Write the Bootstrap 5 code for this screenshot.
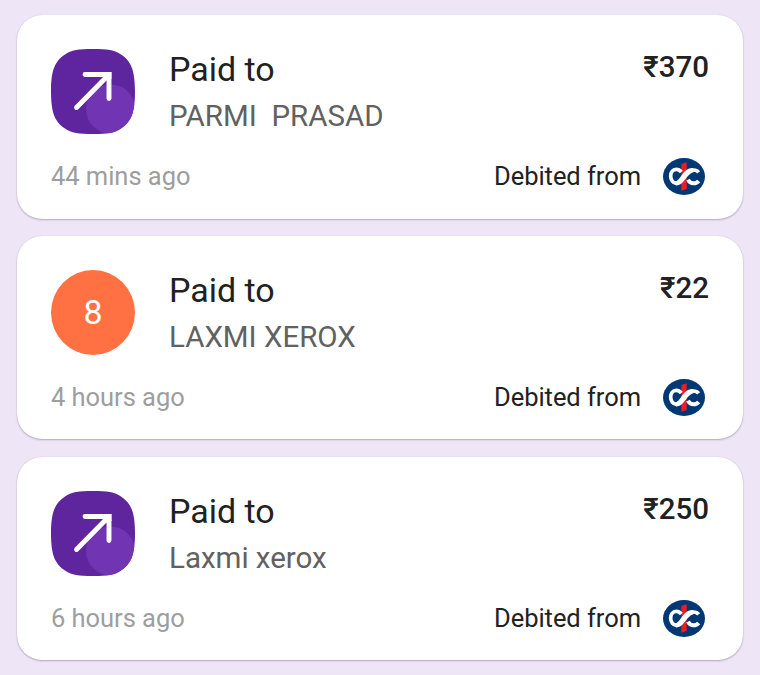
<!DOCTYPE html>
<html lang="en">
<head>
<meta charset="utf-8">
<meta name="viewport" content="width=device-width, initial-scale=1">
<title>Payment history</title>
<link href="https://cdn.jsdelivr.net/npm/bootstrap@5.3.0/dist/css/bootstrap.min.css" rel="stylesheet">
<style>
body { background: #eee6f6; font-family: Roboto, "Noto Sans", sans-serif; color: #212121; }
.history { padding: 15px 17px 14px; gap: 17.2px; }
.payment { height: 203.6px; border-radius: 25px; padding: 34px 34px 0; box-shadow: 0 1px 2px rgba(60,40,80,.32), 0 0 1px rgba(60,40,80,.15); }
.payment-main { height: 85px; gap: 34px; }
.avatar { width: 84px; height: 85px; flex: none; }
.avatar-initial { background: #ff7043; font-size: 34px; line-height: 1; }
.details { margin-top: -3px; }
.kind { font-size: 34px; line-height: 47px; letter-spacing: -.05px; }
.payee { font-size: 29.5px; line-height: 46px; letter-spacing: -.01px; color: #616161; white-space: pre; }
.amount { font-size: 29.5px; line-height: 36px; font-weight: 500; }
.payment-foot { height: 37px; margin-top: 24px; font-size: 25.5px; line-height: 37px; letter-spacing: -.04px; }
.when { color: #9e9e9e; }
.source { gap: 22px; margin-right: 4px; }
.bank { width: 42px; height: 37px; }
</style>
<script src="https://cdn.jsdelivr.net/npm/bootstrap@5.3.0/dist/js/bootstrap.bundle.min.js"></script>
</head>
<body>
<svg width="0" height="0" class="position-absolute" aria-hidden="true">
  <defs>
    <clipPath id="tile"><path d="M42 0C56 0 64 1 70 5.500C80 12 84 21 84 42.500C84 64 80 73 70 79.500C64 84 56 85 42 85C28 85 20 84 14 79.500C4 73 0 64 0 42.500C0 21 4 12 14 5.500C20 1 28 0 42 0Z"/></clipPath>
    <symbol id="sent" viewBox="0 0 84 85">
      <g clip-path="url(#tile)">
        <rect width="84" height="85" fill="#5f259f"/>
        <circle cx="59.500" cy="60" r="24.500" fill="#7134b3"/>
      </g>
      <path d="M34 25.500H58V49.500M57 26.500L25.500 58.500" fill="none" stroke="#fff" stroke-width="4.900" stroke-linecap="round"/>
      <path d="M54 23.050H60.450V30H54Z" fill="#fff"/>
    </symbol>
    <symbol id="bank" viewBox="0 0 126 111">
      <ellipse cx="63" cy="55.500" rx="63" ry="55.500" fill="#003874"/>
      <path d="M55 18L71 13V93L55 98Z" fill="#ed1c24"/>
      <path d="M55 42C50 36 46 34 40 34C29 34 23 43 23 54C23 66 30 76 40 76C59 76 68 36 91 36C99 36 104 39 107 43" fill="none" stroke="#fff" stroke-width="11"/>
      <path d="M75 65C79 73 84 76 91 76C99 76 104 73 107 69" fill="none" stroke="#fff" stroke-width="12"/>
      <path d="M38 82C48 83 55 78 62 70C72 58 78 47 92 42L90 30C72 29 64 42 56 52C50 60 45 69 35 71Z" fill="#fff"/>
    </symbol>
  </defs>
</svg>
<main class="history d-flex flex-column">
  <article class="payment bg-white">
    <div class="payment-main d-flex">
      <svg class="avatar"><use href="#sent"/></svg>
      <div class="details flex-grow-1"><div class="kind">Paid to</div><div class="payee">PARMI  PRASAD</div></div>
      <div class="amount">₹370</div>
    </div>
    <div class="payment-foot d-flex justify-content-between">
      <span class="when">44 mins ago</span>
      <span class="source d-flex align-items-center">Debited from <svg class="bank"><use href="#bank"/></svg></span>
    </div>
  </article>
  <article class="payment bg-white">
    <div class="payment-main d-flex">
      <div class="avatar avatar-initial rounded-circle text-white d-flex align-items-center justify-content-center">8</div>
      <div class="details flex-grow-1"><div class="kind">Paid to</div><div class="payee">LAXMI XEROX</div></div>
      <div class="amount">₹22</div>
    </div>
    <div class="payment-foot d-flex justify-content-between">
      <span class="when">4 hours ago</span>
      <span class="source d-flex align-items-center">Debited from <svg class="bank"><use href="#bank"/></svg></span>
    </div>
  </article>
  <article class="payment bg-white">
    <div class="payment-main d-flex">
      <svg class="avatar"><use href="#sent"/></svg>
      <div class="details flex-grow-1"><div class="kind">Paid to</div><div class="payee">Laxmi xerox</div></div>
      <div class="amount">₹250</div>
    </div>
    <div class="payment-foot d-flex justify-content-between">
      <span class="when">6 hours ago</span>
      <span class="source d-flex align-items-center">Debited from <svg class="bank"><use href="#bank"/></svg></span>
    </div>
  </article>
</main>
</body>
</html>
